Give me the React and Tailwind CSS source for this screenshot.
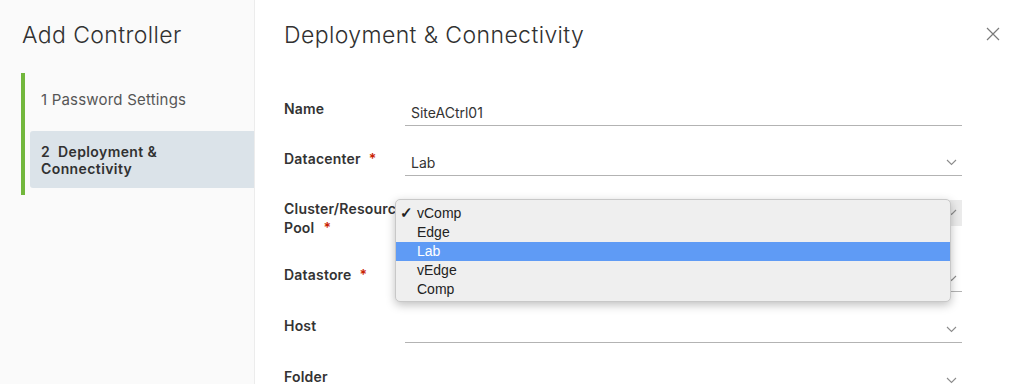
const Chevron = () => (
  <svg width="11" height="7" viewBox="0 0 11 7" className="text-[#8c8c8c]">
    <path d="M1 1l4.5 4.5L10 1" fill="none" stroke="currentColor" strokeWidth="1.1" />
  </svg>
);

const Label = ({ children, required }) => (
  <div className="-mt-[1px] w-[121px] shrink-0 text-[14px] leading-[19px] font-semibold tracking-[0.2px] text-[#333]">
    {children}
    {required && <span className="ml-[8px] text-[#c92100]">*</span>}
  </div>
);

const SelectField = ({ value, grey }) => (
  <div
    className={`flex h-[26px] flex-1 items-center justify-between border-b pl-[6px] pr-[5px] ${
      grey ? 'bg-[#ebebeb] border-[#ebebeb]' : 'border-[#b3b3b3]'
    }`}
  >
    <span className="text-[14px] text-[#333]">{value}</span>
    <Chevron />
  </div>
);

const options = ['vComp', 'Edge', 'Lab', 'vEdge', 'Comp'];

export default function App() {
  return (
    <div className="flex h-[384px] w-[1024px] overflow-hidden bg-white font-['Inter',sans-serif]">
      {/* Wizard steps */}
      <aside className="w-[255px] shrink-0 border-r border-[#ececec] bg-[#fafafa]">
        <h1 className="ml-[22px] mt-[21px] text-[23px] font-light leading-[28px] tracking-[0.4px] text-[#313131]">
          Add Controller
        </h1>
        <nav className="ml-[21px] mt-[24px] border-l-4 border-[#72b73c] pb-[7px] pl-[5px]">
          <div className="flex h-[54px] items-center pl-[11px] text-[15px] tracking-[0.2px] text-[#565656]">
            1 Password Settings
          </div>
          <div className="mt-[4px] flex h-[57px] flex-col justify-center rounded-l-[3px] bg-[#dbe3e9] pl-[11px] text-[14px] font-semibold leading-[17px] tracking-[0.4px] text-[#313131]">
            <span>2&nbsp; Deployment &amp;</span>
            <span>Connectivity</span>
          </div>
        </nav>
      </aside>

      {/* Form */}
      <main className="relative flex-1 pl-[29px] pr-[62px]">
        <div className="flex items-start justify-between">
          <h2 className="mt-[21px] text-[23px] font-light leading-[28px] tracking-[0.4px] text-[#313131]">
            Deployment &amp; Connectivity
          </h2>
          <button className="-mr-[38px] mt-[27px] text-[#7a7a7a]">
            <svg width="14" height="14" viewBox="0 0 14 14" className="block">
              <path d="M1 1l12 12M13 1L1 13" stroke="currentColor" strokeWidth="1.2" />
            </svg>
          </button>
        </div>

        <div className="mt-[51px] flex flex-col">
          <div className="flex h-[50px] items-start">
            <Label>Name</Label>
            <div className="flex h-[26px] flex-1 items-center border-b border-[#b3b3b3] pl-[6px] text-[14px] text-[#333]">
              SiteACtrl01
            </div>
          </div>
          <div className="flex h-[50px] items-start">
            <Label required>Datacenter</Label>
            <SelectField value="Lab" />
          </div>
          <div className="flex h-[66px] items-start">
            <Label>
              Cluster/Resource
              <br />
              Pool<span className="ml-[9px] text-[#c92100]">*</span>
            </Label>
            <SelectField value="vComp" grey />
          </div>
          <div className="flex h-[51px] items-start">
            <Label required>Datastore</Label>
            <SelectField value="" />
          </div>
          <div className="flex h-[51px] items-start">
            <Label>Host</Label>
            <SelectField value="" />
          </div>
          <div className="flex h-[51px] items-start">
            <Label>Folder</Label>
            <SelectField value="" />
          </div>
        </div>

        {/* Open native select menu */}
        <div className="absolute left-[140px] top-[199px] w-[556px] rounded-[5px] border border-[#c8c8c8] bg-[#efefef] pb-[2px] pt-[4px] font-['Liberation_Sans',sans-serif] text-[14px] shadow-[0_3px_10px_rgba(0,0,0,0.25)]">
          {options.map((o) => (
            <div
              key={o}
              className={`flex h-[19px] items-center ${
                o === 'Lab' ? 'bg-[#5f9bf5] text-white' : 'text-[#222]'
              }`}
            >
              <span className="w-[21px] pl-[4px] text-[15px] font-bold">{o === 'vComp' ? '✓' : ''}</span>
              {o}
            </div>
          ))}
        </div>
      </main>
    </div>
  );
}
